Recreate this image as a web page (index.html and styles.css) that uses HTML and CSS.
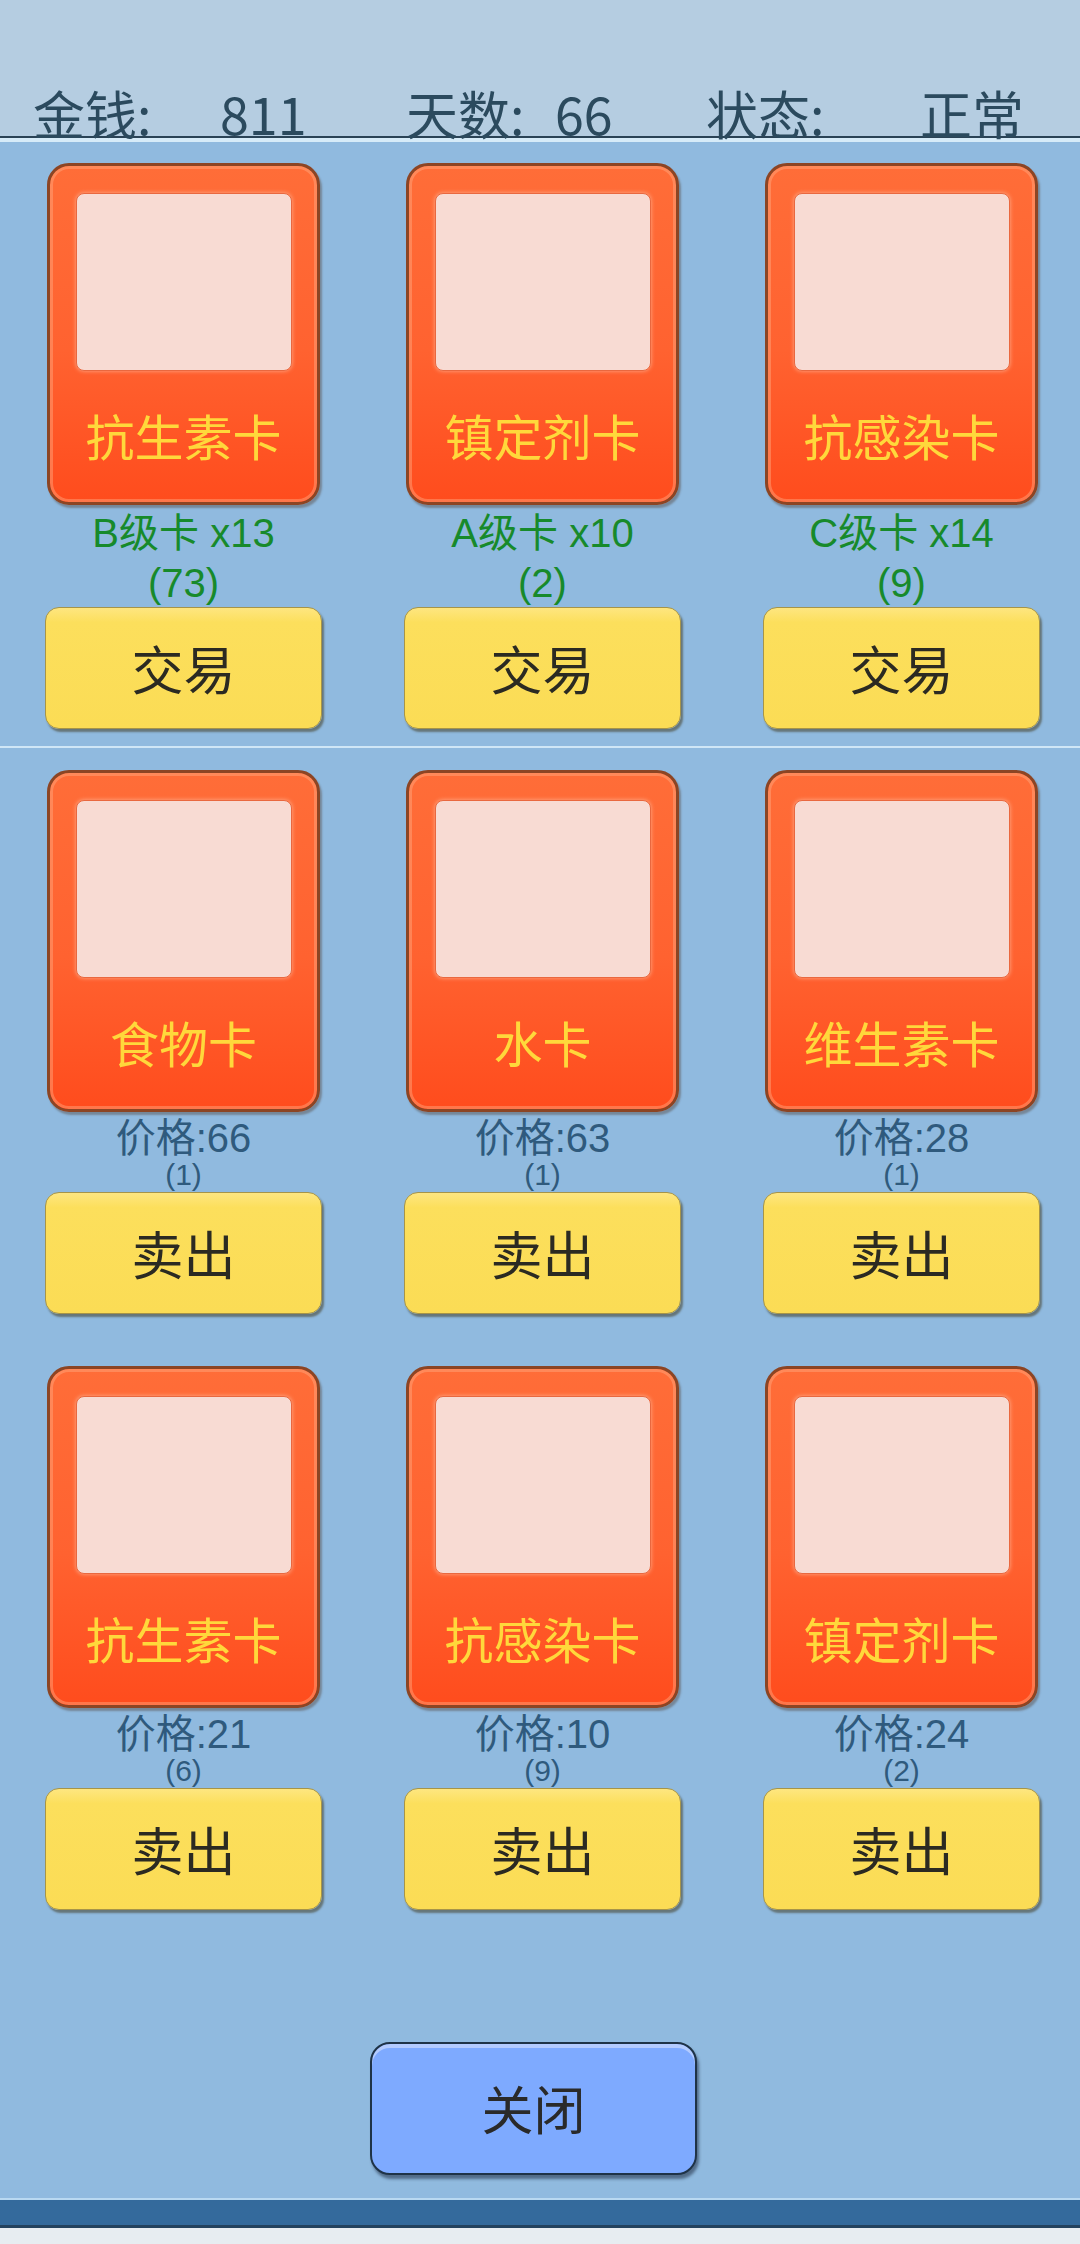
FILE: index.html
```html
<!DOCTYPE html>
<html>
<head>
  <meta charset="utf-8">
  <meta name="viewport" content="width=device-width">
  <title>商店</title>
  <link rel="stylesheet" href="styles.css">
</head>
<body>
  <div class="screen">
    <div class="topbar">
      <div class="stat stat-money"><span class="stat-key">金钱:</span><span class="stat-val">811</span></div>
      <div class="stat stat-days"><span class="stat-key">天数:</span><span class="stat-val">66</span></div>
      <div class="stat stat-state"><span class="stat-key">状态:</span><span class="stat-val">正常</span></div>
    </div>

    <div class="panel">
      <!-- 交易区 -->
      <div class="row">
        <div class="slot">
          <div class="card"><div class="card-pic"></div><div class="card-name">抗生素卡</div></div>
          <div class="grade"><div>B级卡 x13</div><div>(73)</div></div>
          <a href="javascript:;" class="btn">交易</a>
        </div>
        <div class="slot">
          <div class="card"><div class="card-pic"></div><div class="card-name">镇定剂卡</div></div>
          <div class="grade"><div>A级卡 x10</div><div>(2)</div></div>
          <a href="javascript:;" class="btn">交易</a>
        </div>
        <div class="slot">
          <div class="card"><div class="card-pic"></div><div class="card-name">抗感染卡</div></div>
          <div class="grade"><div>C级卡 x14</div><div>(9)</div></div>
          <a href="javascript:;" class="btn">交易</a>
        </div>
      </div>

      <div class="divider"></div>

      <!-- 卖出区 -->
      <div class="row">
        <div class="slot">
          <div class="card"><div class="card-pic"></div><div class="card-name">食物卡</div></div>
          <div class="price"><div class="price-num">价格:66</div><div class="price-count">(1)</div></div>
          <a href="javascript:;" class="btn">卖出</a>
        </div>
        <div class="slot">
          <div class="card"><div class="card-pic"></div><div class="card-name">水卡</div></div>
          <div class="price"><div class="price-num">价格:63</div><div class="price-count">(1)</div></div>
          <a href="javascript:;" class="btn">卖出</a>
        </div>
        <div class="slot">
          <div class="card"><div class="card-pic"></div><div class="card-name">维生素卡</div></div>
          <div class="price"><div class="price-num">价格:28</div><div class="price-count">(1)</div></div>
          <a href="javascript:;" class="btn">卖出</a>
        </div>
      </div>

      <div class="row row-next">
        <div class="slot">
          <div class="card"><div class="card-pic"></div><div class="card-name">抗生素卡</div></div>
          <div class="price"><div class="price-num">价格:21</div><div class="price-count">(6)</div></div>
          <a href="javascript:;" class="btn">卖出</a>
        </div>
        <div class="slot">
          <div class="card"><div class="card-pic"></div><div class="card-name">抗感染卡</div></div>
          <div class="price"><div class="price-num">价格:10</div><div class="price-count">(9)</div></div>
          <a href="javascript:;" class="btn">卖出</a>
        </div>
        <div class="slot">
          <div class="card"><div class="card-pic"></div><div class="card-name">镇定剂卡</div></div>
          <div class="price"><div class="price-num">价格:24</div><div class="price-count">(2)</div></div>
          <a href="javascript:;" class="btn">卖出</a>
        </div>
      </div>

      <a href="javascript:;" class="btn-close">关闭</a>
    </div>

    <div class="bottombar"></div>
  </div>
</body>
</html>
```

FILE: styles.css
```css
*{
  box-sizing: border-box;
}
body{
  margin: 0;
  background: #e7edf1;
  font-family: "Noto Sans CJK SC", sans-serif;
}
.screen{
  width: 1080px;
}

/* 顶部状态栏 */
.topbar{
  display: flex;
  height: 142px;
  padding: 87px 0 0 33px;
  background: #b5cde1;
  border-bottom: 4px solid #d6ebf8;
  box-shadow: inset 0 -2px 0 #2a4356;
  font-size: 52px;
  line-height: 52px;
  color: #2b4a5e;
}
.stat{
  display: flex;
}
.stat-money{
  width: 373px;
}
.stat-money .stat-key{
  width: 187px;
}
.stat-days{
  width: 300px;
}
.stat-days .stat-key{
  width: 149px;
}
.stat-state .stat-key{
  width: 214px;
}

/* 主面板 */
.panel{
  padding: 21px 0 23px;
  background: #90badf;
}
.row{
  display: grid;
  grid-template-columns: repeat(3, 359px);
  padding-left: 4px;
}
.row-next{
  margin-top: 52px;
}
.slot{
  display: flex;
  flex-direction: column;
  align-items: center;
}
.divider{
  height: 2px;
  margin: 17px 0 22px;
  background: #cfe6f6;
}

/* 卡片 */
.card{
  width: 273px;
  height: 342px;
  padding-top: 27px;
  border: 3px solid #8c4524;
  border-radius: 22px;
  background: linear-gradient(#ff6d38, #ff6230 55%, #ff4c1d);
  box-shadow: inset 0 0 0 3px rgba(255,170,130,.45), 2px 3px 2px rgba(70,40,20,.35);
  text-align: center;
}
.card-pic{
  width: 216px;
  height: 178px;
  margin: 0 auto;
  border: 1.5px solid #e9683f;
  border-radius: 8px;
  background: #f8dbd3;
  box-shadow: 0 0 4px rgba(255,190,160,.8);
}
.card-name{
  margin-top: 34px;
  font-size: 49px;
  line-height: 60px;
  color: #ffd83b;
}

/* 数量和价格 */
.grade{
  height: 102px;
  padding-top: 3px;
  font-family: "Liberation Sans", "Noto Sans CJK SC", sans-serif;
  font-size: 40px;
  line-height: 50px;
  color: #178a2b;
  text-align: center;
}
.price{
  height: 80px;
  padding-top: 6px;
  font-family: "Liberation Sans", "Noto Sans CJK SC", sans-serif;
  color: #2f5a7d;
  text-align: center;
}
.price-num{
  font-size: 40px;
  line-height: 40px;
}
.price-count{
  font-size: 30px;
  line-height: 34px;
}

/* 按钮 */
.btn{
  display: block;
  position: relative;
  width: 277px;
  height: 122px;
  border: 1.5px solid #a69449;
  border-radius: 14px;
  background: linear-gradient(#fee680, #fcdf5c 12%, #fbdc55);
  box-shadow: 2px 3px 2px rgba(60,50,20,.5);
  font-size: 52px;
  line-height: 119px;
  color: #2b2a22;
  text-align: center;
  text-decoration: none;
}
.btn-close{
  display: block;
  width: 327px;
  height: 133px;
  margin: 132px 0 0 370px;
  border: 2.5px solid #1f3347;
  border-radius: 20px;
  background: #7eaaff;
  box-shadow: inset 0 4px 0 #b3cbff, 2px 4px 3px rgba(20,30,50,.5);
  font-size: 52px;
  line-height: 128px;
  color: #2a2a2a;
  text-align: center;
  text-decoration: none;
}

.bottombar{
  height: 30px;
  background: #346a9c;
  border-top: 2px solid #b9d9f1;
  border-bottom: 3px solid #23425e;
}
```
